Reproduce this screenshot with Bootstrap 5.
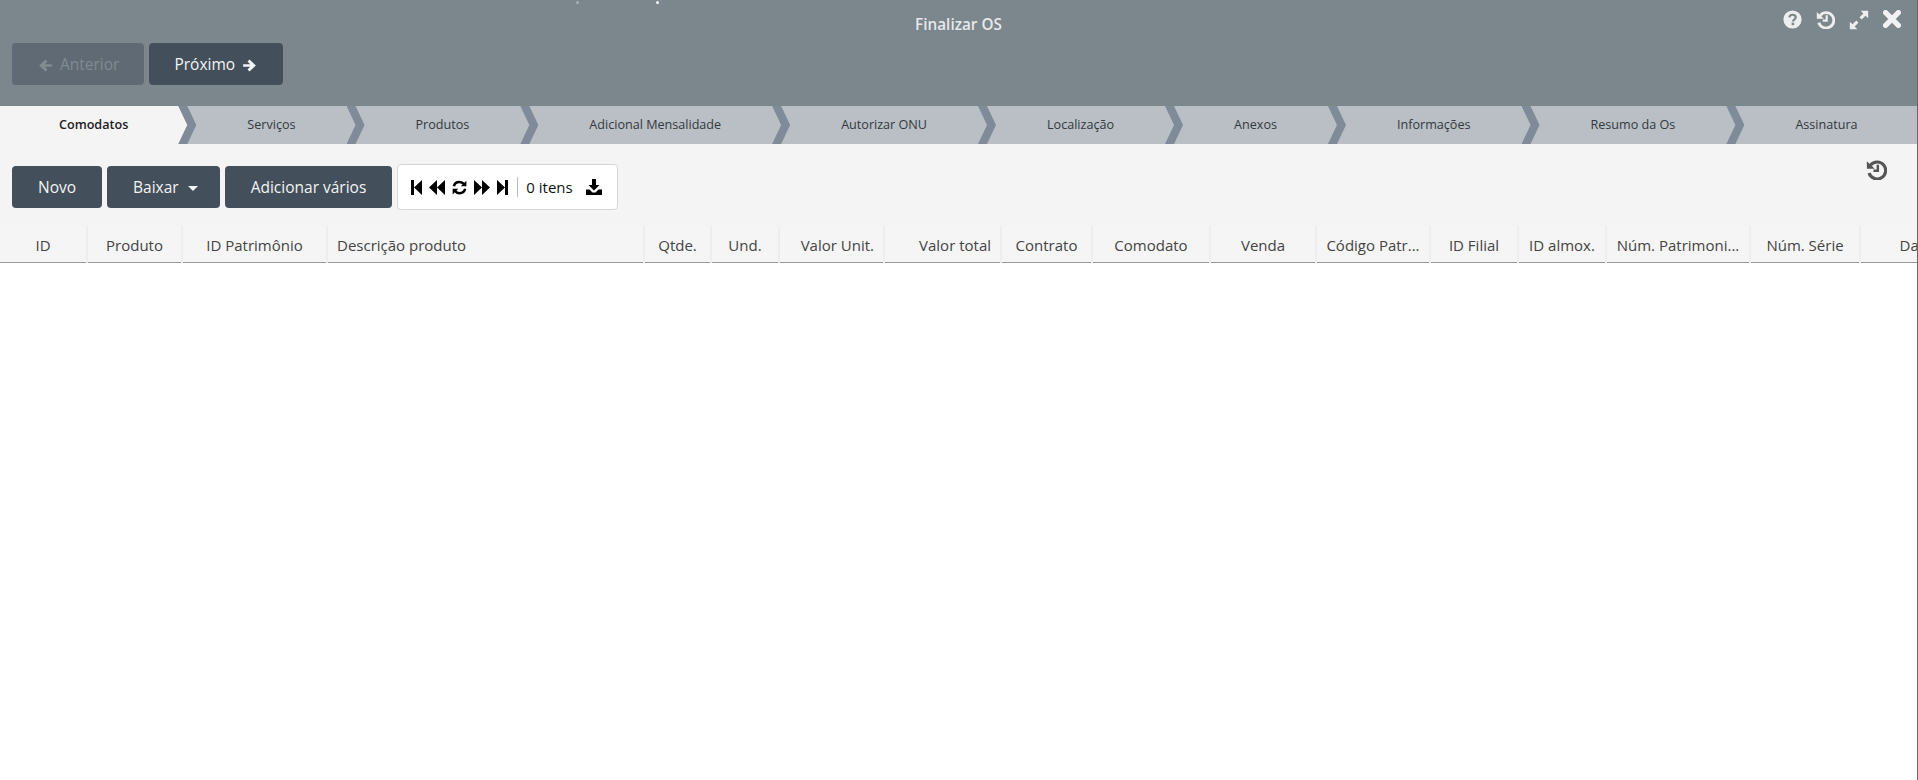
<!DOCTYPE html>
<html lang="pt-BR">
<head>
    <meta charset="UTF-8">
    <meta name="viewport" content="width=device-width, initial-scale=1">
    <title>Finalizar OS</title>
    <link href="https://cdn.jsdelivr.net/npm/bootstrap@5.3.0/dist/css/bootstrap.min.css" rel="stylesheet">
    <style>
        body {
            background: #fff;
            font-family: "Open Sans", "Noto Sans", sans-serif;
            height: 780px;
            overflow: hidden;
        }

        .os-window {
            border-right: 1px solid #666;
            height: 780px;
            overflow: hidden;
        }

        .os-header {
            background: #7b868d;
            height: 106px;
            padding: 0 12px;
            position: relative;
        }

        .os-title-row {
            display: grid;
            grid-template-columns: 1fr auto 1fr;
            height: 43px;
        }

        .os-title {
            color: #e6e9eb;
            font-size: 15.3px;
            font-weight: 600;
            line-height: 49px;
        }

        .os-actions {
            justify-self: end;
            gap: 14px;
            padding: 10px 4px 0 0;
        }

        .spark {
            position: absolute;
            top: 1px;
            width: 3px;
            height: 3px;
            border-radius: 50%;
            background: #fff;
        }

        .spark-a { left: 576px; opacity: .35; }
        .spark-b { left: 656px; }

        .btn-os {
            background: #434f5a;
            border: 0;
            border-radius: 4px;
            color: #f2f4f5;
            font-size: 15.5px;
            font-weight: 500;
            height: 42px;
            padding: 2px 26px 0;
            display: inline-flex;
            align-items: center;
            gap: 7px;
        }

        .btn-os:hover { background: #3a4550; color: #fff; }

        .btn-os:disabled {
            background: #5f6a74;
            color: #808b92;
            opacity: 1;
        }

        .btn-os.is-step { padding: 2px 25px 0; gap: 6px; }

        .btn-os.dropdown-toggle { padding-right: 22px; }
        .btn-os.dropdown-toggle::after {
            margin-left: 2px;
            border-top-width: .35em;
            border-left-width: .35em;
            border-right-width: .35em;
        }

        .os-btn-row { gap: 5px; }

        .os-tabs {
            background: #b9bfc4;
            height: 38px;
            font-size: 12.6px;
        }

        .os-tab {
            color: #33393f;
            line-height: 37px;
            padding: 0 51px 0 69px;
            position: relative;
            white-space: nowrap;
            text-decoration: none;
        }

        .os-tab::after {
            content: "";
            position: absolute;
            z-index: 2;
            top: 0;
            left: 100%;
            width: 18px;
            height: 38px;
            background: #7f8b98;
            clip-path: polygon(0 0, 9px 0, 18px 50%, 9px 100%, 0 100%, 9px 50%);
        }

        .os-tab:last-child::after { display: none; }

        .os-tab.is-active {
            color: #1d2125;
            font-weight: 600;
            padding: 0 50px 0 59px;
        }

        .os-tab.is-active::before {
            content: "";
            position: absolute;
            z-index: 1;
            top: 0;
            bottom: 0;
            left: 0;
            right: -9px;
            background: #f4f4f4;
            clip-path: polygon(0 0, calc(100% - 9px) 0, 100% 50%, calc(100% - 9px) 100%, 0 100%);
        }

        .os-tab.is-active span { position: relative; z-index: 3; }

        .os-toolbar {
            background: #f4f4f4;
            height: 82px;
            padding: 22px 30px 0 12px;
        }

        .os-pager {
            background: #fff;
            border: 1px solid #d6d6d6;
            border-radius: 4px;
            height: 46px;
            margin-top: -2px;
            padding: 0 15px 0 13px;
            color: #111;
            font-size: 15px;
        }

        .pager-icons { gap: 7px; padding-right: 9px; border-right: 1px solid #bbb; height: 20px; }
        .pager-save { margin-left: 13px; }
        .os-history-ico { margin-top: -7px; }

        .os-grid-wrap {
            overflow: hidden;
            background: #f4f4f4;
        }

        .os-grid {
            table-layout: fixed;
            width: 1972px;
            margin: 0;
            font-size: 15px;
            color: #444;
        }

        .os-grid th {
            background: #f5f5f5;
            border-bottom: 1px solid #9a9a9a;
            border-right: 2px solid #eeeeee;
            color: #444;
            font-weight: 400;
            height: 36px;
            padding: 2px 9px 0;
            overflow: hidden;
            white-space: nowrap;
            vertical-align: middle;
            text-align: center;
        }

        .os-grid th.is-left { text-align: left; }
        .os-grid th.is-right { text-align: right; }

        .os-grid col:nth-child(1) { width: 87px; }
        .os-grid col:nth-child(2) { width: 95px; }
        .os-grid col:nth-child(3) { width: 145px; }
        .os-grid col:nth-child(4) { width: 317px; }
        .os-grid col:nth-child(5) { width: 67px; }
        .os-grid col:nth-child(6) { width: 68px; }
        .os-grid col:nth-child(7) { width: 105px; }
        .os-grid col:nth-child(8) { width: 117px; }
        .os-grid col:nth-child(9) { width: 91px; }
        .os-grid col:nth-child(10) { width: 118px; }
        .os-grid col:nth-child(11) { width: 106px; }
        .os-grid col:nth-child(12) { width: 114px; }
        .os-grid col:nth-child(13) { width: 88px; }
        .os-grid col:nth-child(14) { width: 88px; }
        .os-grid col:nth-child(15) { width: 144px; }
        .os-grid col:nth-child(16) { width: 110px; }
        .os-grid col:nth-child(17) { width: 112px; }
    </style>
</head>
<body>
    <svg width="0" height="0" class="d-block">
        <defs>
            <symbol id="i-history" viewBox="0 0 24 24">
                <path d="M5.200 7A9.700 9.700 0 1 1 3.500 16" fill="none" stroke="currentColor" stroke-width="3.600"/>
                <path d="M1 2.500 10 11H1z" fill="currentColor"/>
                <path d="M13.500 6.500V13.500H8.500" fill="none" stroke="currentColor" stroke-width="2.800"/>
            </symbol>
        </defs>
    </svg>

    <div class="os-window">
        <div class="os-header">
            <i class="spark spark-a"></i>
            <i class="spark spark-b"></i>
            <div class="os-title-row">
                <div></div>
                <div class="os-title">Finalizar OS</div>
                <div class="os-actions d-flex align-items-start">
                    <svg width="19" height="19" viewBox="0 0 24 24">
                        <circle cx="12" cy="12" r="11.500" fill="#eceef0"/>
                        <path d="M8 9.300c.3-2.200 2-3.300 4.100-3.300 2.300 0 4 1.400 4 3.300 0 2.600-3.600 2.800-3.600 5.200" fill="none" stroke="#7b868d" stroke-width="2.800"/>
                        <rect x="10.900" y="16" width="3.200" height="3.200" fill="#7b868d"/>
                    </svg>
                    <svg width="19" height="19" color="#eceef0"><use href="#i-history"/></svg>
                    <svg width="20" height="20" viewBox="0 0 24 24">
                        <path d="M14 1h9v9l-3.200-3.200-4.600 4.600-2.600-2.600 4.600-4.600zM10 23H1v-9l3.200 3.200 4.600-4.600 2.600 2.600-4.600 4.600z" fill="#eceef0"/>
                    </svg>
                    <svg width="18" height="18" viewBox="0 0 24 24">
                        <path d="M3.500 3.500l17 17M20.500 3.500l-17 17" fill="none" stroke="#f0f2f3" stroke-width="7" stroke-linecap="round"/>
                    </svg>
                </div>
            </div>
            <div class="d-flex os-btn-row">
                <button class="btn btn-os is-step" disabled>
                    <svg width="17" height="17" viewBox="0 0 24 24"><path d="M21 10.300H11L14.800 6.400 12 3.600 3 12l9 8.400 2.800-2.800L11 13.700h10z" fill="currentColor"/></svg>
                    Anterior
                </button>
                <button class="btn btn-os is-step">
                    Próximo
                    <svg width="17" height="17" viewBox="0 0 24 24"><path d="M3 10.300h10L9.200 6.400 12 3.600l9 8.400-9 8.400-2.800-2.800 3.800-3.900H3z" fill="currentColor"/></svg>
                </button>
            </div>
        </div>

        <nav class="os-tabs d-flex">
            <a class="os-tab is-active" href="#"><span>Comodatos</span></a>
            <a class="os-tab" href="#">Serviços</a>
            <a class="os-tab" href="#">Produtos</a>
            <a class="os-tab" href="#">Adicional Mensalidade</a>
            <a class="os-tab" href="#">Autorizar ONU</a>
            <a class="os-tab" href="#">Localização</a>
            <a class="os-tab" href="#">Anexos</a>
            <a class="os-tab" href="#">Informações</a>
            <a class="os-tab" href="#">Resumo da Os</a>
            <a class="os-tab" href="#">Assinatura</a>
        </nav>

        <div class="os-toolbar d-flex align-items-start os-btn-row">
            <button class="btn btn-os">Novo</button>
            <button class="btn btn-os dropdown-toggle">Baixar</button>
            <button class="btn btn-os">Adicionar vários</button>
            <div class="os-pager d-flex align-items-center">
                <div class="pager-icons d-flex align-items-center">
                    <svg width="11" height="15" viewBox="0 0 11 15"><path d="M0 0h3v15H0zM11 0v15L3 7.500z"/></svg>
                    <svg width="16" height="15" viewBox="0 0 16 15"><path d="M8 0v15L0 7.500zM16 0v15L8 7.500z"/></svg>
                    <svg width="15" height="15" viewBox="0 0 24 24">
                        <path d="M3 10C4 5 8 3 12 3c3 0 5.500 1.300 7 3.500M21 14c-1 5-5 7-9 7-3 0-5.500-1.300-7-3.500" fill="none" stroke="#000" stroke-width="4"/>
                        <path d="M23 1v9h-9zM1 23v-9h9z"/>
                    </svg>
                    <svg width="16" height="15" viewBox="0 0 16 15"><path d="M0 0v15l8-7.500zM8 0v15l8-7.500z"/></svg>
                    <svg width="11" height="15" viewBox="0 0 11 15"><path d="M0 0v15l8-7.500zM8 0h3v15H8z"/></svg>
                </div>
                <span class="ms-2">0 itens</span>
                <svg class="pager-save" width="16" height="16" viewBox="0 0 16 16"><path d="M6 0h4v6h3.500L8 11.500 2.500 6H6zM0 10.500h3.500L6.500 13.500h3l3-3H16V16H0z"/></svg>
            </div>
            <svg class="ms-auto os-history-ico" width="21" height="21" color="#555"><use href="#i-history"/></svg>
        </div>

        <div class="os-grid-wrap">
            <table class="table os-grid">
                <colgroup>
                    <col><col><col><col><col><col><col><col><col><col><col><col><col><col><col><col><col>
                </colgroup>
                <thead>
                    <tr>
                        <th>ID</th>
                        <th>Produto</th>
                        <th>ID Patrimônio</th>
                        <th class="is-left">Descrição produto</th>
                        <th>Qtde.</th>
                        <th>Und.</th>
                        <th class="is-right">Valor Unit.</th>
                        <th class="is-right">Valor total</th>
                        <th>Contrato</th>
                        <th>Comodato</th>
                        <th>Venda</th>
                        <th>Código Patr...</th>
                        <th>ID Filial</th>
                        <th>ID almox.</th>
                        <th>Núm. Patrimoni...</th>
                        <th>Núm. Série</th>
                        <th>Data</th>
                    </tr>
                </thead>
            </table>
        </div>
    </div>
</body>
</html>
